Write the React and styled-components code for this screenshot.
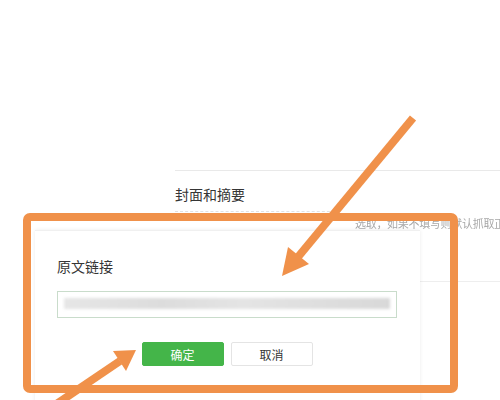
import React from 'react';
import styled, { createGlobalStyle } from 'styled-components';

const GlobalStyle = createGlobalStyle`
    html, body {
        margin: 0;
        padding: 0;
        background: #fff;
    }
    body {
        font-family: "Noto Sans CJK SC", "Noto Sans", sans-serif;
        color: #353535;
    }
`;

const Page = styled.div`
    position: relative;
    width: 500px;
    height: 400px;
    overflow: hidden;
    background: #fff;
`;

const Editor = styled.section`
    padding: 170px 0 0 175px;
`;

const Divider = styled.div`
    border-top: 1px solid #e9e9e9;
`;

const SectionTitle = styled.h3`
    margin: 14px 0 0;
    font-size: 14px;
    font-weight: 400;
    line-height: 18px;
    color: #353535;
`;

const SectionRow = styled.div`
    display: flex;
    align-items: flex-start;
    margin-top: 5px;
`;

const DottedLine = styled.div`
    flex-shrink: 0;
    width: 165px;
    margin-top: 3px;
    border-top: 1px dashed #e2e2e2;
`;

const Hint = styled.span`
    margin: 7px 0 0 15px;
    font-size: 11px;
    letter-spacing: -0.3px;
    white-space: nowrap;
    color: #a8a8a8;
    filter: blur(0.5px);
`;

const SideBox = styled.div`
    margin: 0 0 0 245px;
    height: 50px;
    border-bottom: 1px solid #eee;
`;

const Modal = styled.div`
    position: absolute;
    left: 35px;
    top: 230px;
    width: 385px;
    height: 175px;
    box-sizing: border-box;
    padding: 27px 23px 0 22px;
    background: #fff;
    border-top: 1px solid #f0f0f0;
    box-shadow: 0 0 4px rgba(0, 0, 0, .08);
`;

const ModalTitle = styled.div`
    font-size: 14px;
    line-height: 16px;
    color: #353535;
`;

const Input = styled.div`
    margin-top: 17px;
    width: 340px;
    height: 27px;
    box-sizing: border-box;
    padding: 4px 6px;
    border: 1px solid #c9dccb;
`;

const Blur = styled.div`
    height: 11px;
    margin-top: 2px;
    background: linear-gradient(90deg, #e6e6e6 0%, #dcdcdc 30%, #e4e4e4 55%, #d8d8d8 100%);
    filter: blur(1.5px);
`;

const ButtonRow = styled.div`
    display: flex;
    justify-content: center;
    gap: 7px;
    width: 340px;
    margin-top: 24px;
`;

const Button = styled.button`
    width: 82px;
    height: 24px;
    padding: 0;
    font-family: inherit;
    font-size: 12px;
    border-radius: 2px;
    border: 1px solid ${p => p.primary ? '#44b549' : '#e4e4e4'};
    background: ${p => p.primary ? '#44b549' : '#fff'};
    color: ${p => p.primary ? '#fff' : '#353535'};
`;

const Overlay = styled.svg`
    position: absolute;
    left: 0;
    top: 0;
    pointer-events: none;
`;

const ORANGE = '#f0914a';

const Annotations = () => (
    <Overlay width="500" height="400" viewBox="0 0 500 400">
        <rect x="27" y="217" width="427" height="172" rx="3" fill="none" stroke={ORANGE} strokeWidth="8" />
        <line x1="413" y1="118" x2="298" y2="257" stroke={ORANGE} strokeWidth="8" />
        <polygon points="282,276 288,247 309,264" fill={ORANGE} />
        <line x1="55" y1="405" x2="120" y2="361" stroke={ORANGE} strokeWidth="8" />
        <polygon points="136,350 113,351 126,371" fill={ORANGE} />
    </Overlay>
);

export default function App() {
    return (
        <Page>
            <GlobalStyle />
            <Editor>
                <Divider />
                <SectionTitle>封面和摘要</SectionTitle>
                <SectionRow>
                    <DottedLine />
                    <Hint>选取，如果不填写则默认抓取正文</Hint>
                </SectionRow>
                <SideBox />
            </Editor>
            <Modal>
                <ModalTitle>原文链接</ModalTitle>
                <Input>
                    <Blur />
                </Input>
                <ButtonRow>
                    <Button primary>确定</Button>
                    <Button>取消</Button>
                </ButtonRow>
            </Modal>
            <Annotations />
        </Page>
    );
}
